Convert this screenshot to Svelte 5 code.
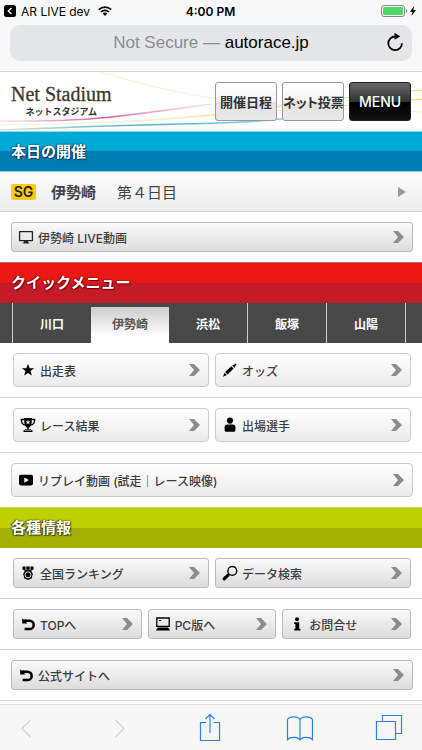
<script lang="ts">
  type Item = { icon: string; label: string }

  let venues = ['川口', '伊勢崎', '浜松', '飯塚', '山陽']
  let active = $state('伊勢崎')

  const quickRows: Item[][] = [
    [{ icon: 'star', label: '出走表' }, { icon: 'pencil', label: 'オッズ' }],
    [{ icon: 'trophy', label: 'レース結果' }, { icon: 'person', label: '出場選手' }],
    [{ icon: 'play', label: 'リプレイ動画 (試走｜レース映像)' }],
  ]

  const infoRows: Item[][] = [
    [{ icon: 'medal', label: '全国ランキング' }, { icon: 'search', label: 'データ検索' }],
    [{ icon: 'back', label: 'TOPへ' }, { icon: 'pc', label: 'PC版へ' }, { icon: 'info', label: 'お問合せ' }],
    [{ icon: 'back', label: '公式サイトへ' }],
  ]
</script>

{#snippet icon(name: string)}
  <svg class="icon" viewBox="0 0 16 16" aria-hidden="true">
    {#if name === 'monitor'}
      <path d="M1.600 2.600h12.800v9H1.600z" fill="none" stroke="#222" stroke-width="1.300" stroke-linejoin="round" />
      <path d="M6 12h4v1.600h1.200v1H4.800v-1H6z" fill="#222" />
    {:else if name === 'star'}
      <path d="M8 1.800l1.600 4.500h4.600l-3.700 2.800 1.400 4.500L8 10.900l-3.900 2.700 1.400-4.500L1.800 6.300h4.600z" />
    {:else if name === 'pencil'}
      <path d="M1 14.800l1.500-4 2.300 2.200zM3.200 9.900l6.200-5.700 2.200 2.300-6.100 5.900zM10.200 3.500l.9-.8.8.3 1.800-1.700 1 1-1.600 1.900.2.800-.9.800z" />
    {:else if name === 'trophy'}
      <path d="M4 1h8l-.3 4.500C11.500 8.600 10 10.300 8.700 10.700v1.600H11v.9h1.500V15h-9v-1.800H5v-.9h2.300v-1.600C6 10.300 4.500 8.600 4.300 5.500z" />
      <path d="M4 2.500H1.300C1.400 5.600 2.700 7.600 5 8.200M12 2.500h2.700C14.600 5.600 13.300 7.600 11 8.200" fill="none" stroke="#000" stroke-width="1.300" />
      <path d="M8 2.800l.7 1.600h1.700L9 5.500l.5 1.700L8 6.200l-1.500 1L7 5.500 5.600 4.400h1.700z" fill="#fff" />
      <path d="M5 13.300h6" stroke="#fff" stroke-width=".6" />
    {:else if name === 'person'}
      <circle cx="8" cy="3.600" r="3.100" />
      <path d="M5.200 7.400h5.600c1.700 0 2.600 1 2.600 2.600v3.300c0 .9-.6 1.500-1.400 1.500H4c-.8 0-1.400-.6-1.400-1.500V10c0-1.600.9-2.600 2.600-2.600z" />
    {:else if name === 'play'}
      <rect x="1" y="2.800" width="14" height="10.600" rx="1.800" />
      <path d="M6.300 5.500v5.200L10.800 8z" fill="#fff" />
    {:else if name === 'medal'}
      <path d="M2.500 1.500h3v4.200l-3-1.200zM6.300 1.500h3.400v3.300H6.300zM10.500 1.500h3v3l-3 1.200z" />
      <path d="M5 5h6l1.800 4-1.200 4.500L8 15l-3.600-1.500L3.200 9z" />
      <circle cx="8" cy="9.800" r="3" fill="none" stroke="#fff" stroke-width=".9" />
    {:else if name === 'search'}
      <circle cx="10.300" cy="5.900" r="4.400" fill="none" stroke="#000" stroke-width="1.400" />
      <path d="M2.200 13.800l1.300-1.300M4.600 11.600l1.400-1.400" stroke="#000" stroke-width="3.200" stroke-linecap="round" />
    {:else if name === 'back'}
      <path d="M5 4.700h4.500a4.200 4.200 0 0 1 0 8.400H4.600" fill="none" stroke="#000" stroke-width="2.500" />
      <path d="M2.200 2.200l1.300 1.300h2.600v2.500l1.300 1.400H2.200z" />
    {:else if name === 'pc'}
      <path d="M1.800 2h12.400v8.300H1.800z" fill="none" stroke="#000" stroke-width="1.300" />
      <path d="M3 11.500h10l2.200 3H.8zM4 4h2.200v1H4z" />
    {:else if name === 'info'}
      <circle cx="8" cy="3.300" r="2" />
      <path d="M5.200 6.200h5v6.500h1.200v1.900H5.200v-1.900h1.200V7.900H5.200z" />
    {/if}
  </svg>
{/snippet}

{#snippet navButton(item: Item)}
  <button class="nav-btn">
    {@render icon(item.icon)}
    <span class="label">{item.label}</span>
    <svg class="chevron" viewBox="0 0 11 12" aria-hidden="true">
      <path d="M0 0h5l6 6-6 6H0l5-6z" fill="#8c8c8c" />
    </svg>
  </button>
{/snippet}

<div class="app">
  <div class="chrome">
    <div class="status">
      <div class="status-side">
        <svg class="back-app" viewBox="0 0 12 12" aria-hidden="true">
          <rect width="12" height="12" rx="2.500" />
          <path d="M7.500 3L4.300 6l3.200 3" fill="none" stroke="#fff" stroke-width="1.400" />
        </svg>
        <span>AR LIVE dev</span>
        <svg class="wifi" viewBox="0 0 14 10" aria-hidden="true">
          <path d="M.8 3.700a9 9 0 0 1 12.400 0M3 6a5.800 5.800 0 0 1 8 0" fill="none" stroke="#000" stroke-width="1.700" />
          <path d="M4.700 7.600a3.400 3.400 0 0 1 4.600 0L7 10z" />
        </svg>
      </div>
      <span class="time">4:00 PM</span>
      <div class="status-side end">
        <svg class="battery" viewBox="0 0 36 12" aria-hidden="true">
          <rect x=".5" y=".5" width="23" height="11" rx="2.500" fill="#fff" stroke="#888" />
          <rect x="2" y="2" width="20" height="8" rx="1" fill="#4cd964" />
          <path d="M25 4v4l1.200-1V5z" fill="#888" />
          <path d="M33 1l-4 5.700h2.500L30.500 11l4.500-6h-2.600z" />
        </svg>
      </div>
    </div>
    <div class="url">
      <span class="address"><span class="insecure">Not Secure —</span> autorace.jp</span>
      <button class="reload" aria-label="Reload">
        <svg viewBox="0 0 18 20" aria-hidden="true">
          <path d="M9 4.500a6.800 6.800 0 1 0 6.900 6.700" fill="none" stroke="#000" stroke-width="1.800" />
          <path d="M8.500.8v7l5.800-3.300z" />
        </svg>
      </button>
    </div>
  </div>

  <header class="site-head">
    <svg class="waves" viewBox="0 0 422 59" preserveAspectRatio="none" aria-hidden="true">
      <defs>
        <linearGradient id="pink">
          <stop offset="0" stop-color="#e9a9cb" stop-opacity=".4" />
          <stop offset=".5" stop-color="#d2599a" />
          <stop offset="1" stop-color="#f3c4dc" stop-opacity=".5" />
        </linearGradient>
        <linearGradient id="cyan">
          <stop offset="0" stop-color="#dfe3d4" />
          <stop offset=".5" stop-color="#4fb2cd" />
          <stop offset="1" stop-color="#8bd0e8" />
        </linearGradient>
        <linearGradient id="gold">
          <stop offset="0" stop-color="#f9eedb" />
          <stop offset=".6" stop-color="#f8e6bb" />
          <stop offset="1" stop-color="#f1c95a" />
        </linearGradient>
        <linearGradient id="lime">
          <stop offset="0" stop-color="#f8f3dc" />
          <stop offset="1" stop-color="#d9de5a" />
        </linearGradient>
      </defs>
      <path d="M0 49Q70 50 120 44T211 32" stroke="url(#pink)" stroke-width="1.400" />
      <path d="M100 0Q160 18 211 26T422 40" stroke="#faf1cf" />
      <path d="M0 53Q150 52 260 37T422 18" stroke="url(#lime)" />
      <path d="M120 50Q250 42 422 27" stroke="url(#gold)" />
      <path d="M0 58Q90 54 180 52T285 46" stroke="url(#cyan)" stroke-width="1.400" />
    </svg>
    <a class="logo" href="#top">
      <span class="logo-en">Net Stadium</span>
      <span class="logo-ja">ネットスタジアム</span>
    </a>
    <div class="head-btns">
      <button class="head-btn">開催日程</button>
      <button class="head-btn">ネット投票</button>
      <button class="head-btn menu">MENU</button>
    </div>
  </header>

  <main>
    <h2 class="bar blue">本日の開催</h2>
    <a class="race" href="#race">
      <span class="grade">SG</span>
      <span class="venue">伊勢崎</span>
      <span class="day">第４日目</span>
      <svg class="arrow" viewBox="0 0 8 10" aria-hidden="true"><path d="M0 0l8 5-8 5z" fill="#999" /></svg>
    </a>
    <div class="row single compact last">
      {@render navButton({ icon: 'monitor', label: '伊勢崎 LIVE動画' })}
    </div>

    <h2 class="bar red">クイックメニュー</h2>
    <div class="tabs" role="tablist">
      {#each venues as venue}
        <button
          class="tab"
          class:active={venue === active}
          role="tab"
          aria-selected={venue === active}
          onclick={() => (active = venue)}
        >{venue}</button>
      {/each}
    </div>
    {#each quickRows as row, i}
      <div class="row" class:single={row.length === 1} class:last={i === quickRows.length - 1}>
        {#each row as item}
          {@render navButton(item)}
        {/each}
      </div>
    {/each}

    <h2 class="bar green">各種情報</h2>
    {#each infoRows as row}
      <div class="row compact" class:single={row.length === 1}>
        {#each row as item}
          {@render navButton(item)}
        {/each}
      </div>
    {/each}
  </main>

  <nav class="toolbar">
    <button aria-label="Back" disabled>
      <svg viewBox="0 0 28 30"><path d="M17.500 7L9 15.500l8.500 8.500" /></svg>
    </button>
    <button aria-label="Forward" disabled>
      <svg viewBox="0 0 28 30"><path d="M11.500 7l8.500 8.500-8.500 8.500" /></svg>
    </button>
    <button aria-label="Share">
      <svg viewBox="0 0 28 30"><path d="M12.500 9.500h-6v18h19v-18h-6M16 20V1.500M11.500 6L16 1.500 20.500 6" /></svg>
    </button>
    <button aria-label="Bookmarks">
      <svg viewBox="0 0 28 30"><path d="M15 6.500C13 3 5 3 2.500 6.500v20C5 23.500 13 23.500 15 27c2-3.500 10-3.500 12.500-.5v-20C25 3 17 3 15 6.500zV27" /></svg>
    </button>
    <button aria-label="Tabs">
      <svg viewBox="0 0 28 30"><path d="M1.500 8.500h19v18h-19zM7.500 8.500v-6h19v18h-6" /></svg>
    </button>
  </nav>
</div>

<style>
  :global(body) { margin: 0; background: #fff; }

  .app { min-height: 100vh; display: flex; flex-direction: column; font-family: Inter, "Noto Sans CJK JP", sans-serif; color: #444; }
  .app button { font-family: inherit; cursor: pointer; }
  svg { display: block; flex: none; }

  .chrome { height: 71px; background: #f8f8f8; border-bottom: 1px solid #d4d4d6; color: #000; }
  .status { height: 22px; padding: 0 5px 0 4px; display: flex; align-items: center; font-size: 12px; }
  .status-side { flex: 1; display: flex; align-items: center; gap: 5px; }
  .status-side.end { justify-content: flex-end; }
  .back-app { width: 12px; height: 12px; }
  .wifi { width: 14px; height: 10px; margin-left: 3px; }
  .battery { width: 36px; height: 12px; }
  .time { font-weight: 600; }
  .url { height: 36px; margin: 3px 10px 0; border-radius: 10px; background: #e5e6e8; display: flex; align-items: center; justify-content: center; position: relative; font-family: "Liberation Sans", sans-serif; font-size: 17px; }
  .insecure { color: #8b8c90; }
  .reload { position: absolute; right: 8px; top: 7px; border: 0; padding: 0; background: none; }
  .reload svg { width: 18px; height: 20px; }

  .site-head { position: relative; height: 59px; box-sizing: border-box; padding: 10px 11px; display: flex; justify-content: space-between; align-items: flex-start; }
  .waves { position: absolute; inset: 0; width: 100%; height: 100%; }
  .waves path { fill: none; }
  .logo { position: relative; display: flex; flex-direction: column; align-items: center; color: #41372b; text-decoration: none; }
  .logo-en { font-family: "Liberation Serif", serif; font-size: 20px; line-height: 25px; -webkit-text-stroke: 0.3px #41372b; }
  .logo-ja { font-size: 9px; line-height: 10px; font-weight: 700; color: #333; }
  .head-btns { position: relative; display: flex; gap: 5px; }
  .head-btn { width: 62px; height: 39px; padding: 0; border: 1px solid #999; border-radius: 3px; background: linear-gradient(#fff, #f3f3f3 50%, #e3e3e3 51%, #e8e8e8); font-size: 13px; font-weight: 700; font-feature-settings: "palt"; color: #333; white-space: nowrap; }
  .head-btn.menu { border-color: #222; background: linear-gradient(#666, #333 50%, #000 51%, #111); color: #fff; font-size: 14px; font-weight: 500; }

  .bar { margin: 0; height: 41px; box-sizing: border-box; padding: 0 11px; font-size: 15px; line-height: 40px; font-weight: 700; color: #fff; }
  .blue { border-top: 1px solid #8fd9ee; border-bottom: 1px solid #8fd0e4; background: linear-gradient(#00a9d6 50%, #007db0 50%); text-shadow: 0 0 2px #003e66, 1px 1px 1px #003e66, -1px 0 1px #003e66; }
  .red { border-top: 1px solid #c86a6a; background: linear-gradient(#ea1815 50%, #c51b28 50%); text-shadow: 0 0 2px #700, 1px 1px 1px #700, -1px 0 1px #700; }
  .green { border-top: 1px solid #c9d46a; background: linear-gradient(#bed000 50%, #a5b100 50%); text-shadow: 0 0 2px #3c4000, 1px 1px 1px #3c4000, -1px 0 1px #3c4000; }

  .race { height: 39px; padding: 0 16px 0 11px; display: flex; align-items: center; border-bottom: 1px solid #ccc; background: linear-gradient(#fdfdfd, #ececec); color: #444; font-size: 15px; text-decoration: none; }
  .grade { width: 25px; height: 16px; border-radius: 2px; background: #fc1; color: #222; font-size: 14px; line-height: 16px; font-weight: 600; text-align: center; }
  .venue { margin-left: 15px; font-weight: 700; }
  .day { margin-left: 21px; flex: 1; }
  .arrow { width: 8px; height: 10px; }

  .row { display: flex; gap: 6px; padding: 10px 11px 10px 13px; border-bottom: 1px solid #d2d2d2; }
  .row.single { padding: 10px 9px 10px 11px; }
  .row.last { border-bottom: 0; }
  .nav-btn { flex: 1 1 0; min-width: 0; height: 34px; padding: 0 8px 0 6px; display: flex; align-items: center; border: 1px solid #ccc; border-radius: 4px; background: linear-gradient(#fff, #ebebeb); color: #3c3c3c; font-size: 12px; font-weight: 500; text-align: left; }
  .compact .nav-btn { height: 30px; border-color: #bbb; border-radius: 3px; background: linear-gradient(#fafafa, #dcdcdc); }
  .icon { width: 16px; height: 16px; margin-right: 4px; }
  .label { flex: 1; white-space: nowrap; }
  .chevron { width: 11px; height: 12px; }

  .tabs { height: 40px; padding: 0 16px 0 12px; display: flex; align-items: flex-end; background: #484848; }
  .tab { flex: 1 1 0; height: 40px; padding: 0; border: 0; border-left: 1px solid #ccc; background: none; color: #fff; font-size: 12px; font-weight: 700; }
  .tab:last-child { border-right: 1px solid #ccc; }
  .tab.active { height: 36px; padding-bottom: 4px; border-left: 0; background: linear-gradient(#ccc, #fff 80%); color: #555; }
  .tab.active + .tab { border-left: 0; }

  .toolbar { position: sticky; bottom: 0; margin-top: auto; height: 45px; padding: 0 19px 0 13px; display: flex; align-items: center; justify-content: space-between; border-top: 1px solid #ddd; background: #f7f7f7; }
  .toolbar button { padding: 0; border: 0; background: none; }
  .toolbar svg { width: 28px; height: 30px; }
  .toolbar path { fill: none; stroke: #2a83e6; stroke-width: 1.200; }
  .toolbar button:disabled path { stroke: #d2d2d2; }
</style>
